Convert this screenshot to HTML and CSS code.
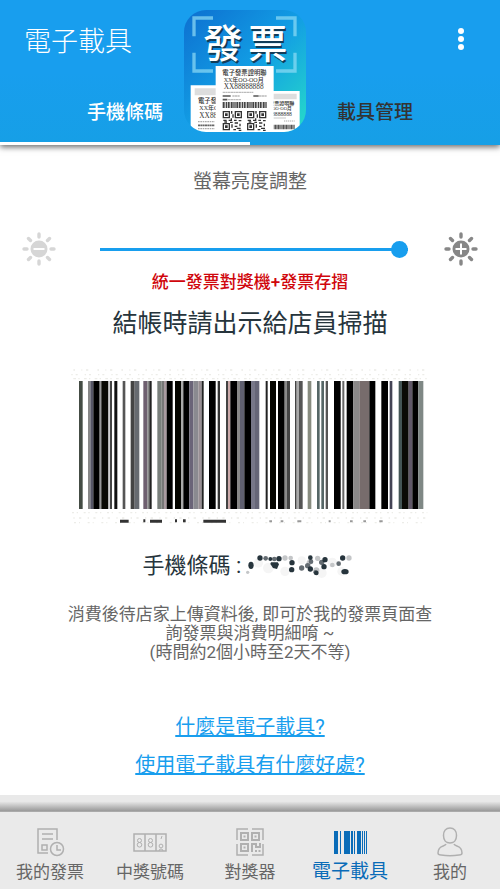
FILE: index.html
```html
<!DOCTYPE html>
<html lang="zh-Hant">
<head>
    <meta charset="UTF-8">
    <meta name="viewport" content="width=device-width, initial-scale=1.0">
    <title>電子載具</title>
    <link rel="stylesheet" href="styles.css">
</head>
<body>
    <header class="header">
        <div class="title-bar">
            <h1>電子載具</h1>
            <button class="menu-btn" aria-label="更多">
                <svg width="8" height="24" viewBox="0 0 8 24" fill="#fff">
                    <circle cx="4" cy="4" r="3"/><circle cx="4" cy="12" r="3"/><circle cx="4" cy="20" r="3"/>
                </svg>
            </button>
        </div>
        <div class="tabs">
            <button class="tab active">手機條碼</button>
            <button class="tab">載具管理</button>
        </div>
        <svg class="logo" width="122" height="122" viewBox="0 0 366 366">
            <defs>
                <linearGradient id="logo-bg" x1="0" y1="0" x2="1" y2="1">
                    <stop offset="0" stop-color="#0d6fd0"/>
                    <stop offset="0.5" stop-color="#129de4"/>
                    <stop offset="1" stop-color="#27dcc8"/>
                </linearGradient>
                <clipPath id="logo-clip"><rect width="366" height="366" rx="66"/></clipPath>
                <g id="finder">
                    <path d="M2 2h18v18H2z" fill="none" stroke="#333" stroke-width="4"/>
                    <path d="M7 7h8v8H7z" fill="#333"/>
                </g>
                <g id="qr">
                    <use href="#finder"/><use href="#finder" x="36"/><use href="#finder" y="36"/>
                    <path d="M27 0v8M31 10v10M26 22v8M2 28h10M18 28h6M34 28h8M48 29h8M5 33h8M22 34h8M36 36h10M28 40v10M52 38v8M36 46h8M42 52h12M32 56h8M48 58h8" fill="none" stroke="#333" stroke-width="4"/>
                </g>
            </defs>
            <g clip-path="url(#logo-clip)">
                <rect width="366" height="366" fill="url(#logo-bg)"/>
                <path d="M30 79V24h57M276 24h57v55M30 128v55h57M276 183h57v-55" fill="none" stroke="#8edcf5" stroke-opacity="0.7" stroke-width="10"/>
                <g class="logo-name">
                    <text x="62" y="149" fill="#123c58">發</text>
                    <text x="196" y="149" fill="#123c58">票</text>
                    <text x="58" y="145" fill="#fff">發</text>
                    <text x="192" y="145" fill="#fff">票</text>
                </g>
                <g class="receipt-text">
                    <path d="M20 226h86v150H20z" fill="#fff"/>
                    <path d="M32 235h70v21H32z" fill="#ddd"/>
                    <text x="42" y="279" font-size="19">電子發票</text>
                    <text x="46" y="301" font-size="18">XX年OO</text>
                    <text x="46" y="323" font-size="22">XX88888</text>
                    <path d="M42 335h50M42 356h50" stroke="#aaa" stroke-width="4" stroke-dasharray="5 2"/>
                    <path d="M42 346h50" stroke="#666" stroke-width="5" stroke-dasharray="6 1"/>
                    <path d="M250 243h97v123h-97z" fill="#fff"/>
                    <path d="M262 251h76v17h-76z" fill="#ddd"/>
                    <text x="256" y="284" font-size="15">發票證明聯</text>
                    <text x="264" y="301" font-size="14">OO-OO月</text>
                    <text x="264" y="317" font-size="17">8888888</text>
                    <path d="M265 324h40M300 333h32" stroke="#aaa" stroke-width="3" stroke-dasharray="4 2"/>
                    <path d="M265 351h67" stroke="#555" stroke-width="14" stroke-dasharray="4 1 2 1"/>
                    <path d="M95 168h174v205H95z" fill="#fff"/>
                    <text x="115" y="195" font-size="19">電子發票證明聯</text>
                    <text x="119" y="217" font-size="18">XX年OO-OO月</text>
                    <text x="119" y="238" font-size="22">XX88888888</text>
                    <path d="M116 247h92M145 258h22M225 258h24M132 269h40" stroke="#bbb" stroke-width="4" stroke-dasharray="7 1"/>
                    <path d="M116 258h24M208 258h16M116 269h14" stroke="#555" stroke-width="5"/>
                    <path d="M116 285h132" stroke="#444" stroke-width="18" stroke-dasharray="4 1 2 2 5 2"/>
                    <use href="#qr" x="116" y="303"/><use href="#qr" x="189" y="303"/>
                </g>
            </g>
        </svg>
    </header>

    <main class="content">
        <label class="brightness-label" for="brightness">螢幕亮度調整</label>
        <div class="brightness">
            <svg width="34" height="34" viewBox="0 0 34 34" stroke="#d6d6d6" stroke-linecap="round">
                <circle cx="17" cy="17" r="8.500" fill="#d6d6d6" stroke="none"/>
                <path d="M17 2v3M17 29v3M2 17h3M29 17h3M6.500 6.500l2 2M25.500 25.500l2 2M6.500 27.500l2-2M25.500 8.500l2-2" stroke-width="3.400"/>
                <path d="M11.500 17h11" stroke="#fff" stroke-width="2" stroke-linecap="butt"/>
            </svg>
            <input type="range" id="brightness" min="0" max="100" value="100">
            <svg width="34" height="34" viewBox="0 0 34 34" stroke="#878787" stroke-linecap="round">
                <circle cx="17" cy="17" r="8.500" fill="#878787" stroke="none"/>
                <path d="M17 2v3M17 29v3M2 17h3M29 17h3M6.500 6.500l2 2M25.500 25.500l2 2M6.500 27.500l2-2M25.500 8.500l2-2" stroke-width="3.400"/>
                <path d="M11.500 17h11M17 11.500v11" stroke="#fff" stroke-width="2" stroke-linecap="butt"/>
            </svg>
        </div>
        <p class="app-name">統一發票對獎機+發票存摺</p>
        <h2>結帳時請出示給店員掃描</h2>

        <svg class="barcode" viewBox="30 30 1080 480" role="img" aria-label="手機條碼">
            <g fill="none" stroke="#ecece8" stroke-width="4">
                <path d="M40 42h1060" stroke-dasharray="5 19 3 11 7 27"/>
                <path d="M34 56h1068" stroke-dasharray="4 9 6 21"/>
                <path d="M40 68h1060" stroke-dasharray="8 7 4 13"/>
                <path d="M36 470h1066" stroke-dasharray="6 8 4 17"/>
                <path d="M40 486h1060" stroke-dasharray="4 13 7 19"/>
                <path d="M42 500h1056" stroke-dasharray="6 9 3 23"/>
            </g>
            <g id="bars"></g>
            <path d="M180 496h26M250 494h6M270 496h36M345 494h6M369 494h8M430 496h68" stroke="#333" stroke-width="9"/>
            <path d="M628 496h8M662 496h8M712 496h12M806 496h6M870 496h8M910 496h8M958 496h10" stroke="#999" stroke-width="6"/>
        </svg>

        <div class="code">
            <span>手機條碼 :</span>
            <svg width="112" height="26" viewBox="0 0 336 78" fill="#26343c">
                <g fill="#f5f5f5"><circle cx="40" cy="30" r="14"/><circle cx="70" cy="45" r="16"/><circle cx="120" cy="55" r="14"/><circle cx="170" cy="22" r="12"/><circle cx="230" cy="60" r="15"/><circle cx="262" cy="28" r="14"/><circle cx="290" cy="55" r="13"/></g>
                <g fill="#c4c6c8"><circle cx="8" cy="58" r="5"/><circle cx="120" cy="15" r="8"/><circle cx="137" cy="15" r="7"/><circle cx="193" cy="28" r="8"/><circle cx="218" cy="16" r="8"/><circle cx="214" cy="52" r="9"/><circle cx="262" cy="36" r="7"/><circle cx="312" cy="15" r="8"/></g>
                <g fill="#646c72"><circle cx="62" cy="16" r="7"/><circle cx="88" cy="18" r="7"/><circle cx="170" cy="45" r="8"/><circle cx="188" cy="38" r="8"/><circle cx="198" cy="26" r="7"/><circle cx="212" cy="58" r="7"/><circle cx="230" cy="28" r="8"/><circle cx="281" cy="32" r="7"/></g>
                <ellipse cx="18" cy="37" rx="8" ry="11"/><circle cx="45" cy="15" r="8"/><circle cx="76" cy="18" r="6"/><circle cx="102" cy="17" r="8"/><path d="M78 28h20l4 6-6 14-12-3-8-12z"/><circle cx="141" cy="29" r="8"/><circle cx="140" cy="50" r="8"/><circle cx="196" cy="14" r="7"/><circle cx="196" cy="48" r="8"/><circle cx="240" cy="20" r="8"/><circle cx="237" cy="41" r="8"/><circle cx="214" cy="60" r="7"/><circle cx="293" cy="15" r="8"/><ellipse cx="300" cy="56" rx="11" ry="8"/>
            </svg>
        </div>

        <p class="note">消費後待店家上傳資料後, 即可於我的發票頁面查詢發票與消費明細唷 ~<br>(時間約2個小時至2天不等)</p>

        <div class="links">
            <a href="#">什麼是電子載具?</a>
            <a href="#">使用電子載具有什麼好處?</a>
        </div>
    </main>

    <nav class="bottom-nav">
        <a href="#">
            <svg width="34" height="34" viewBox="0 0 34 34" fill="none" stroke="#b0b0b0" stroke-width="1.500">
                <path d="M24 16V5H5v24h10M9 10h11M9 15h11M9 21h5v5H9z"/>
                <circle cx="24" cy="25" r="6.500"/><path d="M24 21v5h4"/>
            </svg>
            <span>我的發票</span>
        </a>
        <a href="#">
            <svg width="34" height="34" viewBox="0 0 34 34" fill="none" stroke="#b0b0b0" stroke-width="1.500">
                <path d="M1 10h32v17H1zM12 10v17M23 10v17"/>
                <g stroke-width="1"><circle cx="6.500" cy="16.500" r="2"/><circle cx="6.500" cy="20.800" r="2.300"/><circle cx="17.500" cy="16.500" r="2"/><circle cx="17.500" cy="20.800" r="2.300"/><circle cx="28" cy="22" r="1.900"/><path d="M26 27a2 2 0 1 1 4 0M28 15l1-3"/></g>
            </svg>
            <span>中獎號碼</span>
        </a>
        <a href="#">
            <svg width="34" height="34" viewBox="0 0 34 34" fill="none" stroke="#b0b0b0" stroke-width="1.500">
                <path d="M15 5H4v11M19 5h11v11M4 20v11h11M19 31h11V20"/>
                <path d="M8 9h7v7H8zM19 9h7v7h-7zM8 20h7v7H8z" stroke-width="2"/>
                <path d="M10.500 12.500h2M21.500 12.500h2M10.500 23.500h2M22 27h2M25.500 27h2" stroke-width="2"/>
                <path d="M19 28v-8h4v3h4v-4" stroke-width="2"/>
            </svg>
            <span>對獎器</span>
        </a>
        <a href="#" class="active">
            <svg width="34" height="34" viewBox="0 0 34 34" fill="#0a6cb8">
                <path d="M1 7h4v23H1zM7 7h1v23H7zM11 7h6v23h-6zM18 7h2v23h-2zM21 7h1v23h-1zM24 7h4v23h-4zM29 7h1v23h-1zM31 7h1v23h-1zM33 7h1v23h-1z"/>
            </svg>
            <span>電子載具</span>
        </a>
        <a href="#">
            <svg width="34" height="34" viewBox="0 0 34 34" fill="none" stroke="#b0b0b0" stroke-width="1.500">
                <path d="M17 4c-4 0-6.500 3-6.500 7.500S13 19 17 19s6.500-3 6.500-7.500S21 4 17 4z"/>
                <path d="M13 20c-1 3-8 1-8 9 0 1 1 2 3 2 6 1 12 1 18 0 2 0 3-1 3-2 0-8-7-6-8-9"/>
            </svg>
            <span>我的</span>
        </a>
    </nav>
    <script src="script.js"></script>
</body>
</html>
```

FILE: styles.css
```css
* {
    box-sizing: border-box;
}

body {
    margin: 0;
    min-height: 100vh;
    display: flex;
    flex-direction: column;
    background-color: #fff;
    font-family: Roboto, "Noto Sans CJK TC", sans-serif;
}

h1, h2, p {
    margin: 0;
}

svg {
    display: block;
    flex-shrink: 0;
}

button {
    border: none;
    background: none;
    padding: 0;
    font-family: inherit;
    cursor: pointer;
}

.header {
    position: relative;
    background: linear-gradient(#189eee 50%, #169fe6);
    box-shadow: 0 2px 6px rgba(0, 0, 0, 0.6);
}

.title-bar {
    display: flex;
    justify-content: space-between;
    align-items: center;
    height: 78px;
    padding: 0 35px 0 24px;
}

h1 {
    color: #fff;
    font-size: 27px;
    font-weight: 300;
}

.tabs {
    display: flex;
}

.tab {
    flex: 1;
    height: 67px;
    border-bottom: 3px solid transparent;
    color: #333;
    font-size: 19px;
    font-weight: 500;
}

.tab.active {
    color: #fff;
    border-bottom-color: #fff;
}

/* app logo lies over the title bar and the tabs */
.logo {
    position: absolute;
    top: 10px;
    left: 50%;
    margin-left: -66px;
}

.logo-name {
    font-size: 118px;
    font-weight: 500;
}

.receipt-text {
    font-family: "Liberation Serif", "Noto Sans CJK TC", serif;
    font-weight: 500;
    fill: #333;
}

.content {
    flex: 1;
    display: flex;
    flex-direction: column;
    align-items: center;
    padding-top: 23px;
}

.brightness-label {
    color: #666;
    font-size: 19px;
    line-height: 28px;
}

.brightness {
    display: flex;
    align-items: center;
    justify-content: space-between;
    width: 100%;
    margin-top: 36px;
    padding: 0 22px;
}

.brightness input {
    flex: 1;
    margin: 0 36px 0 44px;
    height: 18px;
    appearance: none;
    background: linear-gradient(#189eee, #189eee) center / 100% 3px no-repeat;
}

.brightness input::-webkit-slider-thumb {
    appearance: none;
    width: 17px;
    height: 17px;
    border-radius: 50%;
    background-color: #189eee;
}

.app-name {
    margin-top: 4px;
    color: #d0060c;
    font-size: 17px;
    font-weight: 500;
    line-height: 24px;
}

h2 {
    margin-top: 12px;
    color: #26343c;
    font-size: 25px;
    font-weight: 400;
    line-height: 36px;
}

.barcode {
    width: 72%;
    margin-top: 24px;
}

.code {
    display: flex;
    align-items: center;
    gap: 4px;
    margin-top: 24px;
    color: #26343c;
    font-size: 22px;
    line-height: 32px;
}

.note {
    width: 74%;
    margin-top: 23px;
    color: #666;
    font-size: 17px;
    line-height: 19px;
    text-align: center;
}

.links {
    display: flex;
    flex-direction: column;
    align-items: center;
    gap: 8px;
    margin: 50px 0 16px;
}

.links a {
    color: #189eee;
    font-size: 20px;
    line-height: 30px;
}

.bottom-nav {
    display: grid;
    grid-template-columns: repeat(5, 1fr);
    border-top: 1px solid #aaa;
    background-color: #eaeaea;
}

.bottom-nav::before {
    content: "";
    grid-column: 1 / -1;
    height: 16px;
    margin-top: -17px;
    background: linear-gradient(#e9e9e9 40%, #999);
}

.bottom-nav a {
    display: flex;
    flex-direction: column;
    align-items: center;
    padding: 12px 0 3px;
    color: #666;
    font-size: 17px;
    line-height: 28px;
    text-decoration: none;
}

.bottom-nav a.active {
    color: #0a6cb8;
    font-size: 19px;
}
```

FILE: script.js
```js
// x, width, color
const bars = [
    [57, 11, '#444c44'], [84, 7, '#888'], [91, 9, '#556'], [100, 19, '#000'], [119, 5, '#999'], [124, 21, '#0b0b05'],
    [145, 4, '#bbb'], [150, 6, '#444'], [163, 9, '#111'], [188, 8, '#555'], [212, 12, '#444'], [224, 14, '#666a70'],
    [250, 12, '#6f6070'], [262, 6, '#888'], [268, 7, '#222'], [292, 13, '#7a807c'], [305, 7, '#777'], [312, 8, '#a99aa0'],
    [320, 18, '#000'], [345, 18, '#050500'], [363, 7, '#aaa'], [370, 18, '#000'], [388, 12, '#6a6478'], [400, 15, '#8a8a90'],
    [415, 10, '#998f94'], [425, 6, '#222'], [447, 20, '#000'], [473, 7, '#333'], [498, 6, '#444'], [504, 7, '#ccaaaa'],
    [511, 20, '#000'], [531, 9, '#888'], [540, 13, '#606070'], [553, 20, '#000'], [573, 12, '#778'], [585, 13, '#667'],
    [617, 6, '#222'], [630, 18, '#050500'], [654, 20, '#000'], [674, 6, '#888'], [680, 10, '#444'], [705, 5, '#444'],
    [710, 7, '#aaa'], [717, 11, '#555'], [743, 11, '#888c80'], [771, 8, '#566'], [784, 8, '#566'], [797, 7, '#555'],
    [822, 20, '#000'], [847, 6, '#666'], [860, 20, '#000'], [880, 18, '#8a8888'], [898, 30, '#776c6c'], [928, 18, '#000'],
    [964, 20, '#000'], [989, 8, '#445'], [1016, 10, '#455'], [1026, 20, '#0a0a05'], [1046, 11, '#605868'], [1057, 18, '#000'],
    [1075, 15, '#7f8885']
];

document.getElementById('bars').innerHTML = bars.map(([x, width, color]) =>
    `<rect x="${x}" y="75" width="${width}" height="384" fill="${color}"/>`
).join('');
```
